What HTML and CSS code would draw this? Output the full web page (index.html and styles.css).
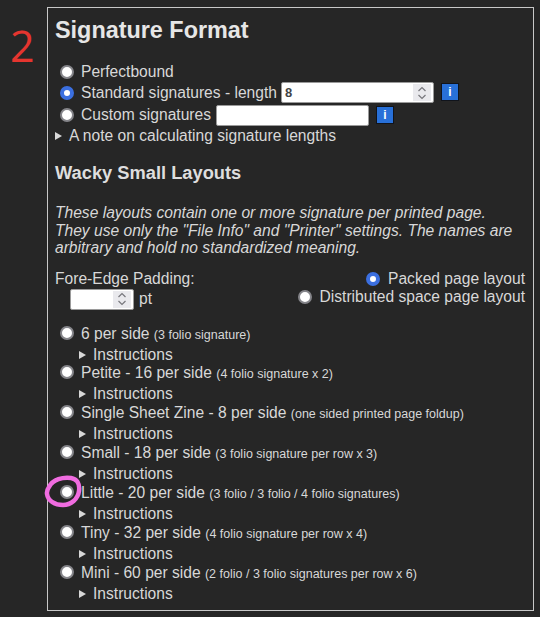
FILE: index.html
```html
<!DOCTYPE html>
<html lang="en">
<head>
<meta charset="utf-8">
<title>Signature Format</title>
<link rel="stylesheet" href="styles.css">
</head>
<body>
<div class="page">
  <span class="mark-two">2</span>
  <svg class="mark-circle" width="38" height="34" viewBox="0 0 38 34"><path d="M5 12C9 4 19 2 27 3C33 4 36 9 35 16C34 24 27 30 19 30C11 30 4 26 3 19C2.600 16 3.500 14 5 12Z"/></svg>
  <section class="panel">
    <h2 class="title">Signature Format</h2>
    <div class="group">
      <label class="row row-first"><input class="radio" type="radio" name="format"><span>Perfectbound</span></label>
      <label class="row row-standard"><input class="radio" type="radio" name="format" checked><span>Standard signatures - length</span>
        <span class="numbox numbox-wide"><span class="numvalue">8</span><span class="spin"><svg width="10" height="16" viewBox="0 0 10 16"><path d="M1.500 6L5 2.500L8.500 6M1.500 10L5 13.500L8.500 10"/></svg></span></span>
        <span class="info">i</span></label>
      <label class="row row-custom"><input class="radio" type="radio" name="format"><span>Custom signatures</span>
        <span class="textbox"></span>
        <span class="info">i</span></label>
      <div class="disclosure"><span class="tri"></span>A note on calculating signature lengths</div>
    </div>
    <h3 class="subtitle">Wacky Small Layouts</h3>
    <p class="intro">These layouts contain one or more signature per printed page.<br>They use only the "File Info" and "Printer" settings. The names are<br>arbitrary and hold no standardized meaning.</p>
    <div class="options">
      <div class="padding">
        <div>Fore-Edge Padding:</div>
        <div class="padding-input"><span class="numbox numbox-small"><span class="numvalue"></span><span class="spin"><svg width="10" height="16" viewBox="0 0 10 16"><path d="M1.500 6L5 2.500L8.500 6M1.500 10L5 13.500L8.500 10"/></svg></span></span> pt</div>
      </div>
      <div class="packing">
        <label class="row-tight"><input class="radio" type="radio" name="pack" checked><span>Packed page layout</span></label>
        <label class="row-tight"><input class="radio" type="radio" name="pack"><span>Distributed space page layout</span></label>
      </div>
    </div>
    <div class="layouts">
      <div class="layout"><label class="layout-name"><input class="radio" type="radio" name="layout"><span>6 per side</span> <small>(3 folio signature)</small></label><div class="instr"><span class="tri"></span>Instructions</div></div>
      <div class="layout"><label class="layout-name"><input class="radio" type="radio" name="layout"><span>Petite - 16 per side</span> <small>(4 folio signature x 2)</small></label><div class="instr"><span class="tri"></span>Instructions</div></div>
      <div class="layout"><label class="layout-name"><input class="radio" type="radio" name="layout"><span>Single Sheet Zine - 8 per side</span> <small>(one sided printed page foldup)</small></label><div class="instr"><span class="tri"></span>Instructions</div></div>
      <div class="layout"><label class="layout-name"><input class="radio" type="radio" name="layout"><span>Small - 18 per side</span> <small>(3 folio signature per row x 3)</small></label><div class="instr"><span class="tri"></span>Instructions</div></div>
      <div class="layout"><label class="layout-name"><input class="radio" type="radio" name="layout"><span>Little - 20 per side</span> <small>(3 folio / 3 folio / 4 folio signatures)</small></label><div class="instr"><span class="tri"></span>Instructions</div></div>
      <div class="layout"><label class="layout-name"><input class="radio" type="radio" name="layout"><span>Tiny - 32 per side</span> <small>(4 folio signature per row x 4)</small></label><div class="instr"><span class="tri"></span>Instructions</div></div>
      <div class="layout"><label class="layout-name"><input class="radio" type="radio" name="layout"><span>Mini - 60 per side</span> <small>(2 folio / 3 folio signatures per row x 6)</small></label><div class="instr"><span class="tri"></span>Instructions</div></div>
    </div>
  </section>
</div>
</body>
</html>
```
FILE: styles.css
```css
* { box-sizing: border-box; }
html, body { margin: 0; height: 100%; }
body {
  background: #262626;
  color: #d8d8d8;
  font-family: "Liberation Sans", Arial, sans-serif;
  font-size: 15.600px;
  line-height: 18px;
  overflow: hidden;
}
.page { position: relative; padding: 7px 6px 0 47px; height: 617px; }
.mark-two {
  position: absolute; left: 10px; top: 18px;
  font-family: "Open Sans", sans-serif; font-weight: 400;
  font-size: 43px; line-height: 56px; color: #e5352f;
}
.mark-circle { position: absolute; left: 44px; top: 475px; z-index: 2; }
.mark-circle path { fill: none; stroke: #f06ce0; stroke-width: 4.500; }
.panel {
  width: 487px; height: 604px;
  border: 1px solid #c8c8c8;
  padding: 7px 8px 0 7px;
}
.title { margin: 0; font-size: 23.400px; line-height: 30px; font-weight: 700; color: #e6e6e6; }
.group { margin-top: 16px; }
.row { display: flex; align-items: center; height: 21px; padding-left: 5px; white-space: nowrap; }
.row-custom { height: 24px; }
.radio {
  appearance: none; -webkit-appearance: none;
  width: 14px; height: 14px; margin: 0 7px 0 0; flex: none;
  border-radius: 50%;
  background: #fff;
  border: 2px solid #85858a;
}
.radio:checked { border: 4px solid #3b6fe0; }
.numbox {
  display: inline-flex; align-items: center; justify-content: space-between;
  height: 21px; background: #fff;
  border: 1px solid #9a9a9a; border-radius: 2px; padding: 0 2px 0 3px;
  color: #444; font-size: 13px; font-weight: 700;
}
.numbox-wide { width: 153px; margin-left: 4px; }
.numbox-small { width: 64px; height: 21px; }
.spin { display: flex; align-items: center; justify-content: center; width: 18px; height: 17px; background: #e9e9ed; }
.spin svg { display: block; }
.spin path { fill: none; stroke: #77777c; stroke-width: 1.200; }
.textbox { display: block; width: 153px; height: 21px; margin-left: 5px; background: #fff; border: 1px solid #9a9a9a; border-radius: 2px; }
.info {
  display: flex; align-items: center; justify-content: center;
  width: 18px; height: 18px; margin-left: 7px; margin-top: -1px;
  background: #2870d8; border: 1px solid #10141c; color: #fff;
  font-size: 12px; font-weight: 700; line-height: 1;
}
.disclosure { display: flex; align-items: center; height: 18px; }
.tri { display: inline-block; width: 0; height: 0; margin-right: 7px; border-left: 7px solid #d8d8d8; border-top: 4px solid transparent; border-bottom: 4px solid transparent; }
.subtitle { margin: 16px 0 0; font-size: 18.300px; line-height: 24px; font-weight: 700; color: #dedede; }
.intro { margin: 19px 0 0; font-style: italic; line-height: 17.500px; }
.options { display: flex; justify-content: space-between; margin-top: 12px; }
.padding { line-height: 20px; }
.padding-input { display: flex; align-items: center; gap: 5px; margin: 0 0 0 15px; height: 21px; }
.packing { display: flex; flex-direction: column; align-items: flex-end; padding-top: 1px; }
.row-tight { display: flex; align-items: center; height: 18px; white-space: nowrap; }
.row-tight .radio { margin-right: 8px; }
.layouts { margin-top: 13px; }
.layout { height: 39.850px; padding-left: 5px; }
.layout-name { display: block; height: 22px; line-height: 22px; white-space: nowrap; }
.layout-name .radio { display: inline-block; vertical-align: -1px; margin-right: 7px; }
.layout small { font-size: 12.500px; }
.instr { display: flex; align-items: center; height: 18px; padding-left: 19px; margin-top: 1px; }
```
